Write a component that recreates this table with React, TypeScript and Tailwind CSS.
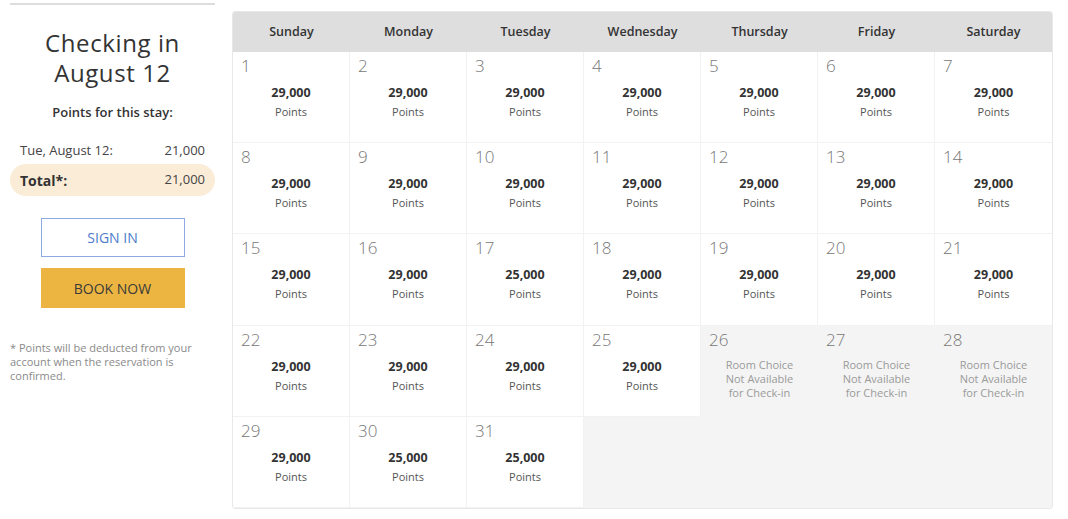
import React from "react";

type Cell =
  | { kind: "pts"; day: number; pts: string }
  | { kind: "na"; day: number }
  | { kind: "empty" };

const prices: Record<number, string> = { 17: "25,000", 30: "25,000", 31: "25,000" };

const cells: Cell[] = [];
for (let d = 1; d <= 31; d++) {
  if (d >= 26 && d <= 28) cells.push({ kind: "na", day: d });
  else cells.push({ kind: "pts", day: d, pts: prices[d] ?? "29,000" });
}
while (cells.length < 35) cells.push({ kind: "empty" });

const days = ["Sunday", "Monday", "Tuesday", "Wednesday", "Thursday", "Friday", "Saturday"];

export default function App() {
  return (
    <div
      className="w-[1068px] h-[519px] bg-white flex overflow-hidden"
      style={{ fontFamily: "'Open Sans', 'Noto Sans', sans-serif" }}
    >
      {/* Left panel */}
      <div className="w-[205px] ml-[10px] mr-[17px] flex flex-col shrink-0">
        <div className="h-[2px] bg-[#dddddd] mt-[3px]" />
        <div className="mt-[23px] text-center text-[24px] leading-[30px] text-[#333] tracking-[0.6px]">
          <div>Checking in</div>
          <div>August 12</div>
        </div>
        <div className="mt-[15px] text-center text-[13px] font-semibold text-[#333] leading-[18px]">
          Points for this stay:
        </div>
        <div className="mt-[20px] flex justify-between px-[10px] text-[13px] text-[#444] leading-[18px]">
          <span>Tue, August 12:</span>
          <span>21,000</span>
        </div>
        <div className="mt-[5px] h-[32px] rounded-full bg-[#fbecd7] flex items-center justify-between px-[10px]">
          <span className="text-[14px] font-bold text-[#333]">Total*:</span>
          <span className="text-[13px] text-[#444]">21,000</span>
        </div>
        <div className="mt-[22px] flex flex-col items-center gap-[11px]">
          <div className="w-[144px] h-[39px] border border-[#8eaae3] flex items-center justify-center text-[14px] text-[#4d7ccb]">
            SIGN IN
          </div>
          <div className="w-[144px] h-[40px] bg-[#ecb541] flex items-center justify-center text-[14px] text-[#3a3a3a]">
            BOOK NOW
          </div>
        </div>
        <div className="mt-[33px] text-[11px] leading-[14px] text-[#8a8a8a]">
          * Points will be deducted from your account when the reservation is confirmed.
        </div>
      </div>

      {/* Calendar */}
      <div className="mt-[11px] w-[821px] h-[498px] rounded-[3px] border border-[#e8e8e8] overflow-hidden flex flex-col">
        <div className="grid grid-cols-7 h-[40px] bg-[#dedede]">
          {days.map((d) => (
            <div key={d} className="flex items-center justify-center text-[12.5px] font-semibold text-[#333]">
              {d}
            </div>
          ))}
        </div>
        <div className="grid grid-cols-7 grid-rows-[91px_91px_92px_91px_91px] flex-1 bg-[#f4f4f4]">
          {cells.map((c, i) => {
            const col = i % 7;
            const right = col < 6 ? (col === 4 ? "border-r border-[#ebebeb]" : "border-r border-[#f2f2f2]") : "";
            if (c.kind === "empty") {
              return <div key={i} className="bg-[#f4f4f4]" />;
            }
            if (c.kind === "na") {
              return (
                <div key={i} className="bg-[#f4f4f4] flex flex-col">
                  <div className="pl-[8px] pt-[2px] text-[17px] font-light text-[#777] leading-[24px]">{c.day}</div>
                  <div className="mt-[6px] text-center text-[11px] leading-[14px] text-[#9a9a9a]">
                    Room Choice
                    <br />
                    Not Available
                    <br />
                    for Check-in
                  </div>
                </div>
              );
            }
            return (
              <div key={i} className={`bg-white border-b border-[#f2f2f2] ${right} flex flex-col`}>
                <div className="pl-[8px] pt-[2px] text-[17px] font-light text-[#777] leading-[24px]">{c.day}</div>
                <div className="mt-[6px] text-center text-[12.5px] font-bold text-[#333] leading-[18px]">{c.pts}</div>
                <div className="text-center text-[11px] text-[#555] leading-[20px]">Points</div>
              </div>
            );
          })}
        </div>
      </div>
    </div>
  );
}
